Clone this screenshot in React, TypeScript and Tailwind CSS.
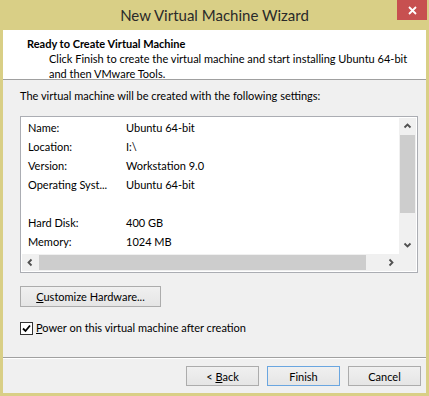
import React from "react";

const Chevron = ({ dir }: { dir: "up" | "down" | "left" | "right" }) => {
  const pts: Record<string, string> = {
    up: "1.5,5.5 4.5,2.5 7.5,5.5",
    down: "1.5,2.5 4.5,5.5 7.5,2.5",
    left: "5.5,1.5 2.5,4.5 5.5,7.5",
    right: "3.5,1.5 6.5,4.5 3.5,7.5",
  };
  return (
    <svg width="9" height="9" viewBox="0 0 9 9">
      <polyline points={pts[dir]} fill="none" stroke="#505050" strokeWidth="1.8" />
    </svg>
  );
};

const rows: [string, string][] = [
  ["Name:", "Ubuntu 64-bit"],
  ["Location:", "I:\\"],
  ["Version:", "Workstation 9.0"],
  ["Operating Syst...", "Ubuntu 64-bit"],
  ["", ""],
  ["Hard Disk:", "400 GB"],
  ["Memory:", "1024 MB"],
];

export default function App() {
  return (
    <div
      className="w-[429px] h-[396px] bg-[#d9cf86] flex flex-col text-[11px] text-black"
      style={{ fontFamily: 'Lato, "Noto Sans", sans-serif' }}
    >
      {/* title bar */}
      <div className="relative h-[30px] flex items-center justify-center">
        <span className="text-[15px] text-[#2a2a2a] leading-none">New Virtual Machine Wizard</span>
        <div className="absolute top-0 right-[2px] w-[30px] h-[20px] bg-[#c75050] flex items-center justify-center">
          <svg width="9" height="9" viewBox="0 0 9 9">
            <path d="M1 1 L8 8 M8 1 L1 8" stroke="#fff" strokeWidth="1.8" />
          </svg>
        </div>
      </div>

      {/* client */}
      <div className="flex-1 mx-[3px] mb-[3px] flex flex-col bg-[#f0f0f0]">
        {/* header */}
        <div className="h-[50px] bg-white pl-[24px] pt-[6px] border-b border-[#a0a0a0] leading-[15px] whitespace-nowrap">
          <div className="font-bold">Ready to Create Virtual Machine</div>
          <div className="pl-[22px]">
            Click Finish to create the virtual machine and start installing Ubuntu 64-bit
            <br />
            and then VMware Tools.
          </div>
        </div>

        {/* body */}
        <div className="pl-[17px] pt-[8px] flex flex-col">
          <div className="h-[15px] leading-[15px] whitespace-nowrap">
            The virtual machine will be created with the following settings:
          </div>

          {/* listbox */}
          <div className="mt-[13px] w-[398px] h-[157px] border border-[#abadb3] bg-white p-[1px]">
            <div className="grid grid-cols-[1fr_17px] grid-rows-[1fr_17px] h-full">
              <div className="bg-white pt-[1px] pl-[6px] overflow-hidden">
                {rows.map(([k, v], i) => (
                  <div key={i} className="h-[19px] flex items-center whitespace-nowrap">
                    <span className="w-[98px]">{k}</span>
                    <span>{v}</span>
                  </div>
                ))}
              </div>
              {/* vertical scrollbar */}
              <div className="bg-[#f0f0f0] flex flex-col">
                <div className="h-[17px] flex items-center justify-center">
                  <Chevron dir="up" />
                </div>
                <div className="h-[78px] mx-[1px] bg-[#cdcdcd]" />
                <div className="flex-1" />
                <div className="h-[17px] flex items-center justify-center">
                  <Chevron dir="down" />
                </div>
              </div>
              {/* horizontal scrollbar */}
              <div className="bg-[#f0f0f0] flex">
                <div className="w-[17px] flex items-center justify-center">
                  <Chevron dir="left" />
                </div>
                <div className="w-[327px] my-[1px] bg-[#cdcdcd]" />
                <div className="flex-1" />
                <div className="w-[17px] flex items-center justify-center">
                  <Chevron dir="right" />
                </div>
              </div>
              <div className="bg-[#f0f0f0]" />
            </div>
          </div>

          {/* customize */}
          <button className="mt-[13px] w-[141px] h-[21px] border border-[#acacac] bg-gradient-to-b from-[#f0f0f0] to-[#e5e5e5] flex items-center justify-center leading-none">
            <span>
              <span className="underline">C</span>ustomize Hardware...
            </span>
          </button>

          {/* checkbox */}
          <div className="mt-[14px] h-[15px] flex items-center gap-[3px] whitespace-nowrap">
            <div className="w-[13px] h-[13px] border border-[#333] bg-white flex items-center justify-center">
              <svg width="9" height="9" viewBox="0 0 9 9">
                <polyline points="1,4.5 3.5,7 8,1.5" fill="none" stroke="#000" strokeWidth="1.8" />
              </svg>
            </div>
            <span>
              <span className="underline">P</span>ower on this virtual machine after creation
            </span>
          </div>
        </div>

        {/* separator */}
        <div className="mt-[21px] border-t border-[#a0a0a0] border-b border-b-white" />

        {/* footer */}
        <div className="mt-[7px] flex justify-end gap-[8px] pr-[5px]">
          <button className="w-[73px] h-[20px] border border-[#acacac] bg-gradient-to-b from-[#f0f0f0] to-[#e5e5e5] flex items-center justify-center leading-none">
            <span>
              &lt; <span className="underline">B</span>ack
            </span>
          </button>
          <button className="w-[73px] h-[20px] border border-[#6aa6e0] bg-gradient-to-b from-[#f0f0f0] to-[#e5e5e5] flex items-center justify-center leading-none">
            Finish
          </button>
          <button className="w-[73px] h-[20px] border border-[#acacac] bg-gradient-to-b from-[#f0f0f0] to-[#e5e5e5] flex items-center justify-center leading-none">
            Cancel
          </button>
        </div>
      </div>
    </div>
  );
}
